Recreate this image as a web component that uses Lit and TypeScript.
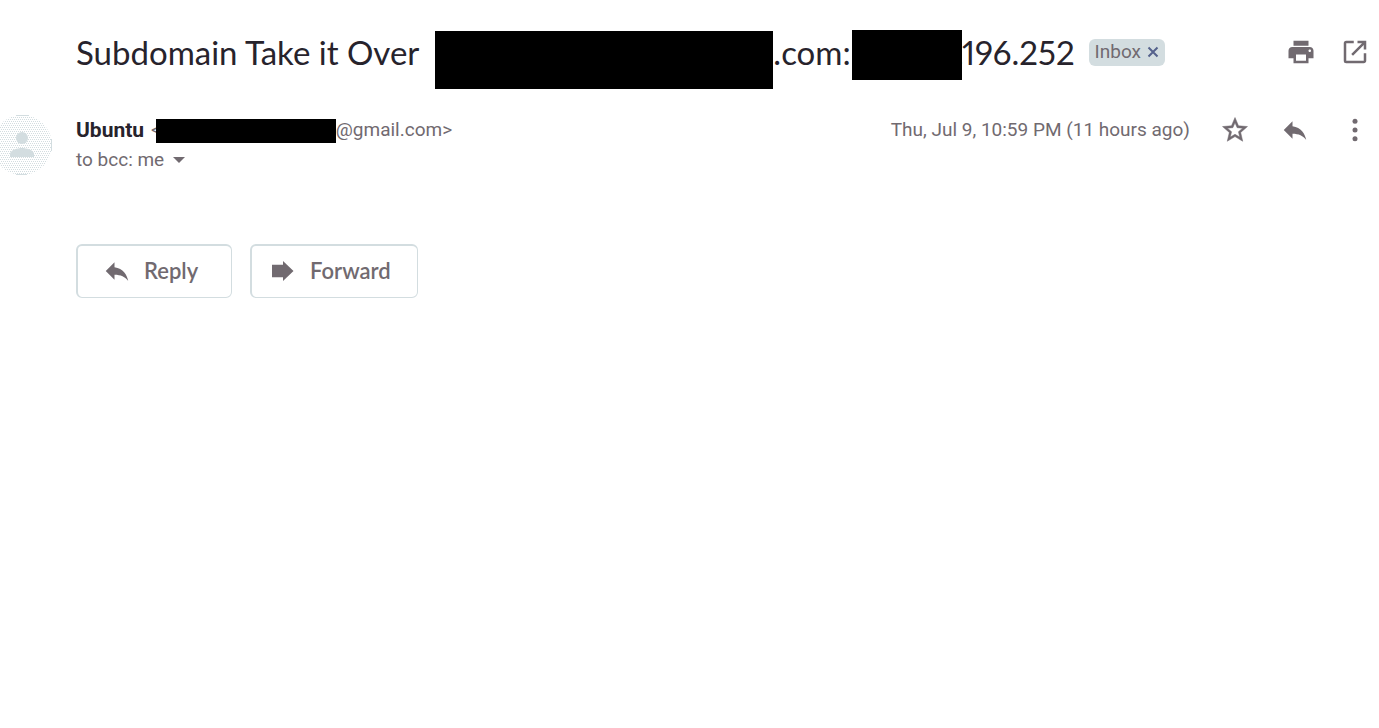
import { LitElement, html, css, svg } from "lit";
import { customElement } from "lit/decorators.js";

const replyIcon = svg`<path d="M10 9V5l-7 7 7 7v-4.100c5 0 8.500 1.600 11 5.100-1-5-4-10-11-11z"/>`;

@customElement("app-root")
export class AppRoot extends LitElement {
  static styles = css`
    :host {
      display: block;
      min-height: 100vh;
      background: #fff;
      color: #27232c;
      font-family: Roboto, "Liberation Sans", sans-serif;
      font-size: 19px;
      line-height: 30px;
      overflow-x: hidden;
    }
    * { box-sizing: border-box; }
    svg { display: block; fill: #716a70; }
    button {
      font: inherit;
      color: inherit;
      background: none;
      border: 0;
      padding: 0;
      margin: 0;
      cursor: pointer;
    }
    .subject {
      display: flex;
      align-items: center;
      padding: 24px 9px 0 76px;
      height: 80px;
    }
    h1 {
      display: flex;
      align-items: center;
      margin: 0;
      font: 400 33px/56px Lato, Roboto, sans-serif;
      font-variant-numeric: proportional-nums;
      white-space: pre;
    }
    .redacted { display: inline-block; background: #000; z-index: 1; }
    .host { width: 338px; height: 58px; margin: 15px 0 0 16px; }
    .address { width: 110px; height: 50px; margin: 6px -6px 0 1px; }
    .sender-mail { position: relative; width: 180px; height: 24px; margin: 2px 0 0 -5px; }
    .label {
      display: flex;
      align-items: center;
      gap: 6px;
      height: 27px;
      margin-left: 14px;
      padding: 0 6px;
      border-radius: 6px;
      background: #d3dde0;
      color: #716a70;
    }
    .tools { display: flex; margin-left: auto; gap: 24px; }
    .message { display: flex; padding: 35px 9px 0 0; }
    .avatar { flex: none; width: 60px; height: 60px; margin-left: -8px; }
    .details { flex: 1; margin-left: 24px; color: #716a70; }
    .line { display: flex; align-items: center; height: 30px; }
    .name { margin: 0 7px 0 0; font-size: 21px; font-weight: 700; color: #27232c; }
    .mail { display: flex; align-items: center; }
    .meta { display: flex; align-items: center; margin-left: auto; gap: 30px; }
    .recipient { display: flex; align-items: center; gap: 3px; height: 30px; }
    .actions { display: flex; gap: 18px; padding: 69px 0 0 76px; }
    .action {
      display: flex;
      align-items: center;
      gap: 12px;
      height: 54px;
      min-width: 156px;
      border: solid #d3dde0;
      border-width: 2px 1px 1px 2px;
      border-radius: 6px;
      padding: 0 24px 2px;
      color: #716a70;
      font: 600 22px/30px Lato, Roboto, sans-serif;
    }
    .forward { min-width: 168px; padding-left: 16px; }
  `;

  render() {
    return html`
      <header class="subject">
        <h1>Subdomain Take it Over<span class="redacted host"></span>.com:<span class="redacted address"></span>.196.252</h1>
        <span class="label">Inbox
          <button aria-label="Remove label Inbox">
            <svg width="12" height="12" viewBox="0 0 12 12"><path d="M1.500 1.500l9 9M10.500 1.500l-9 9" stroke="#55628c" stroke-width="2"/></svg>
          </button>
        </span>
        <div class="tools">
          <button aria-label="Print">
            <svg width="30" height="30" viewBox="0 0 24 24"><path d="M19 8H5c-1.660 0-3 1.340-3 3v6h4v4h12v-4h4v-6c0-1.660-1.340-3-3-3zm-3 11H8v-5h8v5zm3-7c-.550 0-1-.450-1-1s.450-1 1-1 1 .450 1 1-.450 1-1 1zm-1-9H6v4h12V3z"/></svg>
          </button>
          <button aria-label="Open in new window">
            <svg width="30" height="30" viewBox="0 0 24 24"><path d="M19 19H5V5h6V3H5a2 2 0 0 0-2 2v14a2 2 0 0 0 2 2h14c1.100 0 2-.900 2-2v-6h-2v6zM14 3v2h3.590l-8.600 8.600 1.410 1.410L19 6.410V10h2V3h-7z"/></svg>
          </button>
        </div>
      </header>
      <section class="message">
        <svg class="avatar" viewBox="0 0 60 60" role="img" aria-label="Sender">
          <defs>
            <pattern id="dots" width="4" height="4" patternUnits="userSpaceOnUse">
              <path d="M0 0h1v1H0zM2 0h1v1H2zM1 2h1v1H1zM3 2h1v1H3z" fill="#d3dde0"/>
            </pattern>
          </defs>
          <circle cx="30" cy="30" r="30" fill="url(#dots)"/>
          <path d="M24 0h13v1H24zM24 59h11v1H24zM59 24h1v12h-1z" fill="#d3dde0"/>
          <circle cx="30" cy="23" r="6" fill="#d3dde0"/>
          <path d="M18 42v-3c0-4 8-6 12-6s12 2 12 6v3z" fill="#d3dde0"/>
        </svg>
        <div class="details">
          <div class="line">
            <h2 class="name">Ubuntu</h2>
            <span class="mail">&lt;<span class="redacted sender-mail"></span>@gmail.com&gt;</span>
            <div class="meta">
              <time>Thu, Jul 9, 10:59 PM (11 hours ago)</time>
              <button aria-label="Star">
                <svg width="30" height="30" viewBox="0 0 24 24"><path d="M22 9.240l-7.190-.620L12 2 9.190 8.630 2 9.240l5.460 4.730L5.820 21 12 17.270 18.180 21l-1.630-7.030L22 9.240zM12 15.400l-3.760 2.270 1-4.280-3.320-2.880 4.380-.380L12 6.100l1.710 4.040 4.380.380-3.320 2.880 1 4.280L12 15.400z" stroke="#716a70" stroke-width=".4"/></svg>
              </button>
              <button aria-label="Reply">
                <svg width="30" height="30" viewBox="0 0 24 24">${replyIcon}</svg>
              </button>
              <button aria-label="More">
                <svg width="30" height="30" viewBox="0 0 24 24"><circle cx="12" cy="5" r="2"/><circle cx="12" cy="12" r="2"/><circle cx="12" cy="19" r="2"/></svg>
              </button>
            </div>
          </div>
          <div class="recipient">to bcc: me
            <button aria-label="Show details">
              <svg width="24" height="24" viewBox="0 0 24 24"><path d="M6 9h12l-6 6z"/></svg>
            </button>
          </div>
        </div>
      </section>
      <footer class="actions">
        <button class="action">
          <svg width="30" height="30" viewBox="0 0 24 24">${replyIcon}</svg>Reply
        </button>
        <button class="action forward">
          <svg width="30" height="30" viewBox="0 0 24 24"><path d="M3.200 7h8.800V4l8.400 8-8.400 8v-3H3.200z"/></svg>Forward
        </button>
      </footer>
    `;
  }
}
